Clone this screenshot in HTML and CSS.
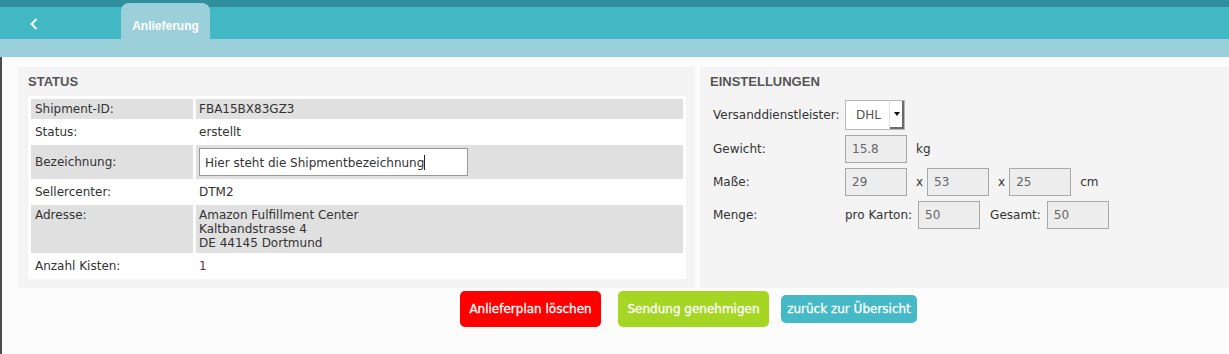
FILE: index.html
```html
<!DOCTYPE html>
<html lang="de">
<head>
    <meta charset="UTF-8">
    <title>Anlieferung</title>
    <link rel="stylesheet" href="styles.css">
</head>
<body>
<div class="topbar">
    <a class="back" href="#">
        <svg width="8" height="12" viewBox="0 0 8 12"><polyline points="6.5,1 1.5,6 6.5,11" fill="none" stroke="#fff" stroke-width="2"/></svg>
    </a>
    <div class="tab">Anlieferung</div>
</div>
<div class="subbar"></div>

<div class="content">
    <div class="panels">
        <section class="panel status">
            <h3>STATUS</h3>
            <table class="info">
                <tr class="odd"><td class="label">Shipment-ID:</td><td>FBA15BX83GZ3</td></tr>
                <tr><td class="label">Status:</td><td>erstellt</td></tr>
                <tr class="odd"><td class="label">Bezeichnung:</td><td><div class="textbox">Hier steht die Shipmentbezeichnung<span class="caret"></span></div></td></tr>
                <tr><td class="label">Sellercenter:</td><td>DTM2</td></tr>
                <tr class="odd top"><td class="label">Adresse:</td><td>Amazon Fulfillment Center<br>Kaltbandstrasse 4<br>DE 44145 Dortmund</td></tr>
                <tr><td class="label">Anzahl Kisten:</td><td class="num">1</td></tr>
            </table>
        </section>

        <section class="panel settings">
            <h3>EINSTELLUNGEN</h3>
            <div class="form">
                <span>Versanddienstleister:</span>
                <div class="row">
                    <div class="select"><span class="val">DHL</span><span class="arrow"></span></div>
                </div>

                <span>Gewicht:</span>
                <div class="row">
                    <span class="field">15.8</span><span class="unit">kg</span>
                </div>

                <span>Maße:</span>
                <div class="row">
                    <span class="field">29</span><span class="times">x</span>
                    <span class="field">53</span><span class="times">x</span>
                    <span class="field">25</span><span class="unit">cm</span>
                </div>

                <span>Menge:</span>
                <div class="row">
                    <span class="sub">pro Karton:</span><span class="field">50</span>
                    <span class="sub gap">Gesamt:</span><span class="field">50</span>
                </div>
            </div>
        </section>
    </div>

    <div class="actions">
        <button class="btn red">Anlieferplan löschen</button>
        <button class="btn green">Sendung genehmigen</button>
        <button class="btn teal">zurück zur Übersicht</button>
    </div>
</div>
</body>
</html>
```

FILE: styles.css
```css
body { margin: 0; font-family: "DejaVu Sans", Verdana, sans-serif; font-size: 12px; color: #333; background: #fcfcfc; }

.topbar { height: 39px; display: flex; align-items: flex-end; background: linear-gradient(to bottom, #2f8f9d 0, #2f8f9d 7px, #42b8c4 7px); }
.back { align-self: flex-start; display: block; width: 91px; height: 21px; padding: 18px 0 0 30px; }
.back svg { display: block; }
.tab { width: 89px; height: 36px; box-sizing: border-box; padding-top: 15px; background: #9bd0da; border-radius: 8px 8px 0 0; color: #fff; font: bold 12px/16px "Liberation Sans", Arial, sans-serif; text-align: center; }
.subbar { height: 18px; background: #9bd0da; }

.content { border-left: 2px solid #4d4d4d; padding: 10px 0 0 16px; height: 297px; box-sizing: border-box; }
.panels { display: flex; gap: 5px; height: 221px; }
.panel { background: #f4f4f4; padding: 6px 10px; box-sizing: border-box; }
.panel h3 { margin: 0; font: bold 13px/18px "Liberation Sans", Arial, sans-serif; color: #555; }
.status { width: 677px; }
.settings { flex: 1; }

.info { margin-top: 5px; width: 658px; border-spacing: 3px; background: #fff; }
.info td { padding: 3px; line-height: 14px; vertical-align: middle; background: #fff; }
.info tr.top td { vertical-align: top; }
.info tr.odd td { background: #e0e0e0; }
.info td.label { width: 155px; padding-left: 4px; }
.info td.num { color: #6b3434; }
.textbox { width: 269px; height: 28px; box-sizing: border-box; border: 1px solid #999; background: #fff; padding: 6px 5px; line-height: 14px; }
.caret { display: inline-block; width: 1px; height: 15px; background: #222; vertical-align: -3px; }

.form { margin: 9px 0 0 3px; display: grid; grid-template-columns: 132px auto; row-gap: 5px; align-items: center; }
.row { display: flex; align-items: center; }
.select { display: flex; width: 60px; height: 30px; box-sizing: border-box; border: 1px solid #b8b8b8; background: #fff; }
.select .val { flex: 1; padding-left: 10px; line-height: 28px; color: #555; }
.select .arrow { width: 14px; border-left: 1px solid #e2e2e2; box-shadow: inset -2px -2px 0 #6a6a6a; position: relative; }
.select .arrow::after { content: ""; position: absolute; left: 4px; top: 11px; border-left: 3px solid transparent; border-right: 3px solid transparent; border-top: 4px solid #111; }
.field { display: block; width: 62px; height: 28px; box-sizing: border-box; border: 1px solid #a8a8a8; background: #ededed; color: #666; padding-left: 6px; line-height: 26px; }
.unit { margin-left: 9px; }
.times { margin: 0 4px 0 9px; }
.sub { margin-right: 6px; }
.sub.gap { margin-left: 10px; }

.actions { display: flex; align-items: center; padding: 3px 0 0 442px; }
.btn { border: none; border-radius: 5px; color: #fff; font-family: "DejaVu Sans", Verdana, sans-serif; font-size: 12px; padding: 0; -webkit-text-stroke: 0.3px #fff; }
.red { width: 141px; height: 36px; background: #ff0000; margin-right: 17px; }
.green { width: 151px; height: 36px; background: #a5d624; margin-right: 12px; }
.teal { width: 136px; height: 28px; background: #45b9c5; }
```
